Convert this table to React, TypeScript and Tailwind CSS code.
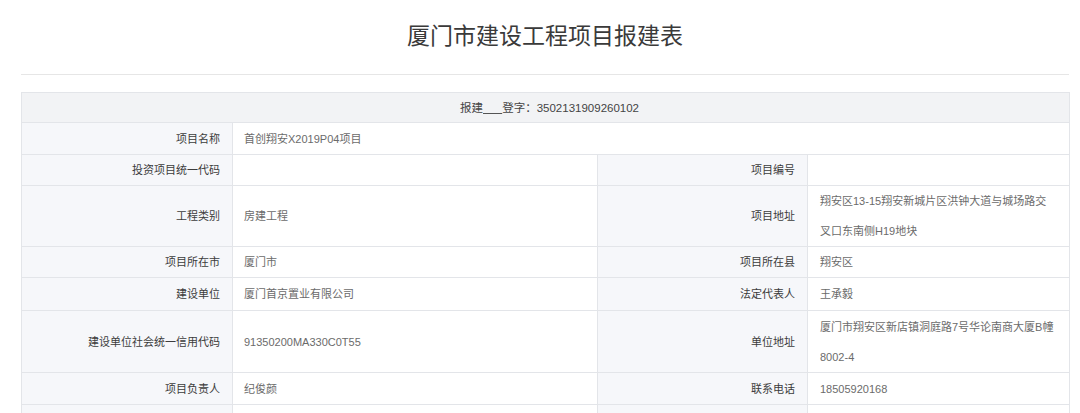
const FONT = "font-['Liberation_Sans','Noto_Sans_CJK_SC',sans-serif]";

interface Row {
  l1: string;
  v1: string;
  l2?: string;
  v2?: string;
  h: string;
}

const rows: Row[] = [
  { l1: "项目名称", v1: "首创翔安X2019P04项目", h: "h-[32px]" },
  { l1: "投资项目统一代码", v1: "", l2: "项目编号", v2: "", h: "h-[31px]" },
  {
    l1: "工程类别",
    v1: "房建工程",
    l2: "项目地址",
    v2: "翔安区13-15翔安新城片区洪钟大道与城场路交叉口东南侧H19地块",
    h: "h-[61px]",
  },
  { l1: "项目所在市", v1: "厦门市", l2: "项目所在县", v2: "翔安区", h: "h-[31px]" },
  { l1: "建设单位", v1: "厦门首京置业有限公司", l2: "法定代表人", v2: "王承毅", h: "h-[33px]" },
  {
    l1: "建设单位社会统一信用代码",
    v1: "91350200MA330C0T55",
    l2: "单位地址",
    v2: "厦门市翔安区新店镇洞庭路7号华论南商大厦B幢8002-4",
    h: "h-[62px]",
  },
  { l1: "项目负责人", v1: "纪俊颜", l2: "联系电话", v2: "18505920168", h: "h-[32px]" },
  { l1: "", v1: "", l2: "", v2: "", h: "h-[31px]" },
];

const label = "bg-[#f6f7fa] border border-[#e3e5e9] text-right pr-[12px] pl-2 text-[#3c3c3c] align-middle";
const value = "bg-white border border-[#e3e5e9] text-left px-[11px] text-[#6b6b6b] align-middle break-all";

export default function App() {
  return (
    <div className={`w-[1080px] h-[413px] overflow-hidden bg-white ${FONT}`}>
      <div className="ml-[21px] w-[1048px]">
        {/* ── Title ── */}
        <h1 className="pt-[20px] text-center text-[23px] leading-[32px] text-[#3a3a3a] font-normal">
          厦门市建设工程项目报建表
        </h1>
        <div className="mt-[22px] border-t border-[#e6e6e6]" />

        {/* ── Form table ── */}
        <table className="mt-[17px] w-[1048px] table-fixed border-collapse text-[11px] leading-[30px]">
          <colgroup>
            <col className="w-[211px]" />
            <col className="w-[365px]" />
            <col className="w-[210px]" />
            <col className="w-[262px]" />
          </colgroup>
          <tbody>
            <tr className="h-[30px]">
              <td colSpan={4} className="bg-[#f2f3f5] border border-[#e3e5e9] text-center text-[#444] text-[11.5px] leading-[28px] pl-[8px]">
                报建<u className="decoration-[#555]">&nbsp;&nbsp;&nbsp;&nbsp;&nbsp;&nbsp;</u>登字：3502131909260102
              </td>
            </tr>
            {rows.map((r, i) => (
              <tr key={i} className={r.h}>
                <td className={label}>{r.l1}</td>
                {r.l2 === undefined ? (
                  <td colSpan={3} className={value}>
                    {r.v1}
                  </td>
                ) : (
                  <>
                    <td className={value}>{r.v1}</td>
                    <td className={label}>{r.l2}</td>
                    <td className={`${value} px-[12px]`}>{r.v2}</td>
                  </>
                )}
              </tr>
            ))}
          </tbody>
        </table>
      </div>
    </div>
  );
}
